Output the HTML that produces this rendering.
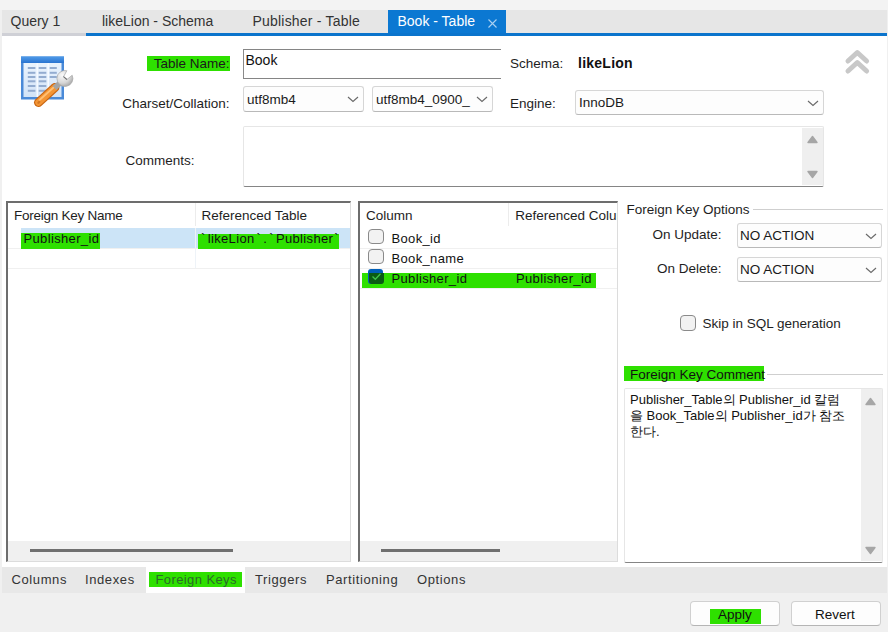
<!DOCTYPE html>
<html><head><meta charset="utf-8"><style>
html,body{margin:0;padding:0;width:888px;height:632px;overflow:hidden;background:#f0f0f0}
body{position:relative;font-family:"Liberation Sans",sans-serif}
.r{position:absolute}
.t{position:absolute;line-height:1;white-space:nowrap}
</style></head><body>
<div class="r" style="left:0px;top:0px;width:888px;height:632px;background:#f0f0f0"></div>
<div class="r" style="left:0px;top:0px;width:888px;height:10px;background:#f3f3f3"></div>
<div class="r" style="left:2px;top:10px;width:885px;height:23px;background:#e6e6e6"></div>
<div class="r" style="left:2px;top:33px;width:84px;height:3px;background:#cfd0d6"></div>
<div class="r" style="left:86px;top:33px;width:801px;height:3px;background:#0b74cc"></div>
<div class="r" style="left:388px;top:10px;width:118px;height:23px;background:#0b78d2"></div>
<div class="r" style="left:2px;top:36px;width:885px;height:531px;background:#ffffff"></div>
<div class="t" style="left:10.50px;top:13.65px;font-size:14px;color:#333;">Query 1</div>
<div class="t" style="left:102.00px;top:13.65px;font-size:14px;color:#333;">likeLion - Schema</div>
<div class="t" style="left:252.50px;top:13.65px;font-size:14px;color:#333;letter-spacing:0.2px">Publisher - Table</div>
<div class="t" style="left:397.50px;top:13.65px;font-size:14px;color:#fff;">Book - Table</div>
<svg class="r" style="left:487px;top:18px" width="11" height="11"><path d="M1.5 1.5L9.5 9.5M9.5 1.5L1.5 9.5" stroke="#a9d0f2" stroke-width="1.1"/></svg>
<svg class="r" style="left:18px;top:52px" width="62" height="62" viewBox="0 0 62 62">
<defs><linearGradient id="tg" x1="0" y1="0" x2="0" y2="1"><stop offset="0" stop-color="#eaf3fd"/><stop offset="1" stop-color="#d2e3f7"/></linearGradient>
<linearGradient id="hb" x1="0" y1="0" x2="0" y2="1"><stop offset="0" stop-color="#4f9be9"/><stop offset="1" stop-color="#2a74d0"/></linearGradient>
<radialGradient id="hg" cx="0.35" cy="0.3" r="0.8"><stop offset="0" stop-color="#fafafa"/><stop offset="0.6" stop-color="#d6d6d6"/><stop offset="1" stop-color="#9e9e9e"/></radialGradient></defs>
<rect x="3" y="4.5" width="43" height="43" fill="#4a8ad8"/>
<rect x="3" y="4.5" width="43" height="6.5" fill="url(#hb)"/>
<rect x="5.5" y="11" width="38" height="34" fill="url(#tg)"/>
<rect x="18.5" y="11" width="1.6" height="34" fill="#f6faff"/><rect x="29.4" y="11" width="1.6" height="34" fill="#f6faff"/>
<rect x="9.8" y="15" width="7.6" height="2" fill="#93acd0"/><rect x="20.7" y="15" width="7.6" height="2" fill="#93acd0"/><rect x="31.7" y="15" width="7.1" height="2" fill="#93acd0"/><rect x="9.8" y="19.8" width="7.6" height="2" fill="#93acd0"/><rect x="20.7" y="19.8" width="7.6" height="2" fill="#93acd0"/><rect x="31.7" y="19.8" width="7.1" height="2" fill="#93acd0"/><rect x="9.8" y="24" width="7.6" height="2" fill="#93acd0"/><rect x="20.7" y="24" width="7.6" height="2" fill="#93acd0"/><rect x="31.7" y="24" width="7.1" height="2" fill="#93acd0"/><rect x="9.8" y="28.3" width="7.6" height="2" fill="#93acd0"/><rect x="20.7" y="28.3" width="7.6" height="2" fill="#93acd0"/><rect x="9.8" y="33" width="7.6" height="2" fill="#93acd0"/><rect x="20.7" y="33" width="7.6" height="2" fill="#93acd0"/><rect x="9.8" y="37.8" width="7.6" height="2" fill="#93acd0"/><rect x="20.7" y="37.8" width="7.6" height="2" fill="#93acd0"/>
<path d="M20.5 50.5 L36.9 35.5" stroke="#c86410" stroke-width="9" stroke-linecap="round"/>
<path d="M20.5 50.5 L36.9 35.5" stroke="#f39535" stroke-width="6.5" stroke-linecap="round"/>
<path d="M21.5 48 L35.5 35.5" stroke="#ffbf73" stroke-width="1.8" stroke-linecap="round"/>
<ellipse cx="20.8" cy="50.3" rx="1.8" ry="1.2" fill="#d47722" transform="rotate(-42 20.8 50.3)"/>
<path d="M36.5 36 L42 31" stroke="#a4a4a4" stroke-width="5.5"/>
<path d="M48.84 18.74 A8 8 0 1 0 54.2 23.24 L48.9 27.53 L45.54 24.7 Z" fill="url(#hg)" stroke="#a6a6a6" stroke-width="0.7"/>
<path d="M45.54 24.7 L48.9 27.53" stroke="#707070" stroke-width="1.1"/>
</svg>
<div class="r" style="left:147px;top:56px;width:83px;height:15px;background:#2ee000"></div>
<div class="t" style="right:658.50px;top:56.97px;font-size:13.5px;color:#1a1a1a;">Table Name:</div>
<div class="t" style="right:658.50px;top:96.67px;font-size:13.5px;color:#1e1e1e;">Charset/Collation:</div>
<div class="t" style="right:693.50px;top:153.57px;font-size:13.5px;color:#1e1e1e;">Comments:</div>
<div class="r" style="left:243px;top:48.5px;width:258px;height:30.0px;border-top:1.5px solid #858585;border-bottom:1.5px solid #858585;border-left:1.5px solid #8a8a8a;background:#fff;box-sizing:border-box"></div>
<div class="t" style="left:245.50px;top:53.05px;font-size:14px;color:#111;">Book</div>
<div class="r" style="left:243px;top:86px;width:121px;height:26px;border:1px solid #d6d6d6;border-bottom-color:#b9b9b9;border-radius:3px;background:#fdfdfd;box-sizing:border-box"></div><div class="t" style="left:247.00px;top:92.87px;font-size:13.5px;color:#1a1a1a;">utf8mb4</div><svg class="r" style="left:347px;top:95.0px" width="12" height="8"><path d="M1 2L6 6.5L11 2" fill="none" stroke="#6a6a6a" stroke-width="1.15"/></svg>
<div class="r" style="left:372px;top:86px;width:121px;height:26px;border:1px solid #d6d6d6;border-bottom-color:#b9b9b9;border-radius:3px;background:#fdfdfd;box-sizing:border-box"></div><div class="t" style="left:376.00px;top:92.87px;font-size:13.5px;color:#1a1a1a;">utf8mb4_0900_</div><svg class="r" style="left:476px;top:95.0px" width="12" height="8"><path d="M1 2L6 6.5L11 2" fill="none" stroke="#6a6a6a" stroke-width="1.15"/></svg>
<div class="t" style="left:510.00px;top:56.87px;font-size:13.5px;color:#1e1e1e;">Schema:</div>
<div class="t" style="left:578.00px;top:56.45px;font-size:14px;color:#111;font-weight:bold;letter-spacing:0.25px">likeLion</div>
<div class="t" style="left:510.00px;top:96.87px;font-size:13.5px;color:#1e1e1e;">Engine:</div>
<div class="r" style="left:575px;top:90px;width:249px;height:25px;border:1px solid #d6d6d6;border-bottom-color:#b9b9b9;border-radius:3px;background:#fdfdfd;box-sizing:border-box"></div><div class="t" style="left:579.00px;top:96.37px;font-size:13.5px;color:#1a1a1a;">InnoDB</div><svg class="r" style="left:807px;top:98.5px" width="12" height="8"><path d="M1 2L6 6.5L11 2" fill="none" stroke="#6a6a6a" stroke-width="1.15"/></svg>
<div class="r" style="left:243px;top:126px;width:581px;height:61px;border:1px solid #e6e6e6;border-bottom:1.5px solid #858585;border-radius:2px;background:#fff;box-sizing:border-box"></div>
<div class="r" style="left:802px;top:128px;width:21px;height:57px;background:#efefef"></div>
<svg class="r" style="left:805.5px;top:134px" width="13" height="10"><path d="M2 8.5L6.5 2.5L11 8.5Z" fill="#a6a6a6" stroke="#a6a6a6" stroke-width="1.4" stroke-linejoin="round"/></svg>
<svg class="r" style="left:805.5px;top:170px" width="13" height="10"><path d="M2 1.5L6.5 7.5L11 1.5Z" fill="#a6a6a6" stroke="#a6a6a6" stroke-width="1.4" stroke-linejoin="round"/></svg>
<svg class="r" style="left:842px;top:46px" width="32" height="32"><path d="M6 15L15.3 6.5L24.6 15M6 25L15.3 16.5L24.6 25" fill="none" stroke="#c8c8c8" stroke-width="5" stroke-linecap="round" stroke-linejoin="round"/></svg>
<div class="r" style="left:6px;top:201px;width:345px;height:361px;border-top:2px solid #6d6d6d;border-left:2px solid #6d6d6d;border-right:1px solid #dcdcdc;border-bottom:1px solid #dcdcdc;background:#fff;box-sizing:border-box"></div>
<div class="r" style="left:195px;top:203px;width:1px;height:23px;background:#ececec"></div>
<div class="t" style="left:14.00px;top:209.47px;font-size:13.5px;color:#1e1e1e;letter-spacing:-0.25px">Foreign Key Name</div>
<div class="t" style="left:201.50px;top:209.47px;font-size:13.5px;color:#1e1e1e;">Referenced Table</div>
<div class="r" style="left:21px;top:228px;width:329px;height:20px;background:#cce4f7"></div>
<div class="r" style="left:195px;top:228px;width:1px;height:40px;background:#eef3f8"></div>
<div class="r" style="left:8px;top:248px;width:342px;height:1px;background:#f0f0f0"></div>
<div class="r" style="left:8px;top:268px;width:342px;height:1px;background:#f0f0f0"></div>
<div class="r" style="left:21px;top:233px;width:79px;height:16px;background:#2ee000"></div>
<div class="r" style="left:198px;top:233.5px;width:141px;height:15.0px;background:#2ee000"></div>
<div class="t" style="left:23.50px;top:232.00px;font-size:13px;color:#111;letter-spacing:0.35px">Publisher_id</div>
<div class="t" style="left:201.00px;top:232.00px;font-size:13px;color:#111;letter-spacing:0.35px"><span style="margin-right:2px">`</span>likeLion<span style="margin:0 2px">`</span><span style="margin-right:2px">.</span><span style="margin-right:2px">`</span>Publisher<span style="margin-left:1px">`</span></div>
<div class="r" style="left:8px;top:541px;width:342px;height:20px;background:#f0f0f0"></div>
<div class="r" style="left:30px;top:549px;width:203px;height:3px;background:#707070"></div>
<div class="r" style="left:358px;top:201px;width:260px;height:361px;border-top:2px solid #6d6d6d;border-left:2px solid #6d6d6d;border-right:1px solid #dcdcdc;border-bottom:1px solid #dcdcdc;background:#fff;box-sizing:border-box;overflow:hidden"></div>
<div class="r" style="left:508px;top:203px;width:1px;height:23px;background:#ececec"></div>
<div class="t" style="left:366.00px;top:209.17px;font-size:13.5px;color:#1e1e1e;">Column</div>
<div class="r" style="left:360px;top:203px;width:257px;height:30px;overflow:hidden"><div class="t" style="left:155.30px;top:6.17px;font-size:13.5px;color:#1e1e1e;">Referenced Column</div></div>
<div class="r" style="left:360px;top:248px;width:257px;height:1px;background:#f0f0f0"></div>
<div class="r" style="left:360px;top:268px;width:257px;height:1px;background:#f0f0f0"></div>
<div class="r" style="left:360px;top:288px;width:257px;height:1px;background:#f0f0f0"></div>
<div class="r" style="left:368.3px;top:228.6px;width:15.5px;height:15.5px;border-radius:4px;border:1.8px solid #8a8a8a;background:#f2f2f2;box-sizing:border-box"></div>
<div class="r" style="left:368.3px;top:248.6px;width:15.5px;height:15.5px;border-radius:4px;border:1.8px solid #8a8a8a;background:#f2f2f2;box-sizing:border-box"></div>
<div class="r" style="left:362px;top:273px;width:234px;height:15px;background:#2ee000"></div>
<div class="r" style="left:368.3px;top:268.6px;width:15px;height:15px;border-radius:3px;background:#005fb8"></div>
<div class="r" style="left:368.5px;top:273px;width:15px;height:11px;border-radius:0 0 3px 3px;background:#0a5a14"></div>
<svg class="r" style="left:368.5px;top:269px" width="15" height="15"><path d="M3.5 7.5L6.3 10.3L11.5 4.8" fill="none" stroke="#3ec24a" stroke-width="1.3"/></svg>
<div class="t" style="left:391.50px;top:231.70px;font-size:13px;color:#111;letter-spacing:0.35px">Book_id</div>
<div class="t" style="left:391.50px;top:251.70px;font-size:13px;color:#111;letter-spacing:0.35px">Book_name</div>
<div class="t" style="left:391.50px;top:271.70px;font-size:13px;color:#111;letter-spacing:0.35px">Publisher_id</div>
<div class="t" style="left:516.00px;top:271.70px;font-size:13px;color:#111;letter-spacing:0.35px">Publisher_id</div>
<div class="r" style="left:360px;top:541px;width:257px;height:20px;background:#f0f0f0"></div>
<div class="r" style="left:381px;top:549px;width:119px;height:3px;background:#707070"></div>
<div class="t" style="left:626.50px;top:203.17px;font-size:13.5px;color:#1e1e1e;">Foreign Key Options</div>
<div class="r" style="left:753px;top:208.5px;width:130px;height:1.5px;background:#cfcfcf"></div>
<div class="t" style="right:166.50px;top:227.97px;font-size:13.5px;color:#1e1e1e;">On Update:</div>
<div class="t" style="right:166.50px;top:261.57px;font-size:13.5px;color:#1e1e1e;">On Delete:</div>
<div class="r" style="left:737px;top:223px;width:145px;height:25px;border:1px solid #d6d6d6;border-bottom-color:#b9b9b9;border-radius:3px;background:#fdfdfd;box-sizing:border-box"></div><div class="t" style="left:740.00px;top:229.37px;font-size:13.5px;color:#1a1a1a;">NO ACTION</div><svg class="r" style="left:865px;top:231.5px" width="12" height="8"><path d="M1 2L6 6.5L11 2" fill="none" stroke="#6a6a6a" stroke-width="1.15"/></svg>
<div class="r" style="left:737px;top:257px;width:145px;height:25px;border:1px solid #d6d6d6;border-bottom-color:#b9b9b9;border-radius:3px;background:#fdfdfd;box-sizing:border-box"></div><div class="t" style="left:740.00px;top:263.37px;font-size:13.5px;color:#1a1a1a;">NO ACTION</div><svg class="r" style="left:865px;top:265.5px" width="12" height="8"><path d="M1 2L6 6.5L11 2" fill="none" stroke="#6a6a6a" stroke-width="1.15"/></svg>
<div class="r" style="left:680px;top:315px;width:15.5px;height:15.5px;border:1.8px solid #8a8a8a;border-radius:4px;background:#f2f2f2;box-sizing:border-box"></div>
<div class="t" style="left:702.50px;top:316.97px;font-size:13.5px;color:#1e1e1e;">Skip in SQL generation</div>
<div class="r" style="left:624px;top:366px;width:140px;height:15px;background:#2ee000"></div>
<div class="t" style="left:630.00px;top:367.57px;font-size:13.5px;color:#111;">Foreign Key Comment</div>
<div class="r" style="left:767px;top:373.5px;width:116px;height:1.5px;background:#cfcfcf"></div>
<div class="r" style="left:623.5px;top:388px;width:259.0px;height:175px;border:1px solid #e6e6e6;border-bottom:1.5px solid #858585;border-radius:2px;background:#fff;box-sizing:border-box"></div>
<div class="r" style="left:861px;top:389px;width:21px;height:172px;background:#efefef"></div>
<svg class="r" style="left:864px;top:395.5px" width="13" height="10"><path d="M2 8.5L6.5 2.5L11 8.5Z" fill="#a6a6a6" stroke="#a6a6a6" stroke-width="1.4" stroke-linejoin="round"/></svg>
<svg class="r" style="left:864px;top:546px" width="13" height="10"><path d="M2 1.5L6.5 7.5L11 1.5Z" fill="#a6a6a6" stroke="#a6a6a6" stroke-width="1.4" stroke-linejoin="round"/></svg>
<div class="t" style="left:630.00px;top:393.00px;font-size:13px;color:#111;">Publisher_Table의 Publisher_id 칼럼</div>
<div class="t" style="left:630.00px;top:409.40px;font-size:13px;color:#111;">을 Book_Table의 Publisher_id가 참조</div>
<div class="t" style="left:630.00px;top:425.00px;font-size:13px;color:#111;">한다.</div>
<div class="r" style="left:2px;top:567px;width:885px;height:26px;background:#e8e8e8"></div>
<div class="r" style="left:146px;top:562px;width:99px;height:31px;background:#ffffff"></div>
<div class="r" style="left:148.5px;top:572px;width:93.0px;height:14.5px;background:#2ee000"></div>
<div class="t" style="left:11.50px;top:573.40px;font-size:13px;color:#333;letter-spacing:0.6px">Columns</div>
<div class="t" style="left:85.00px;top:573.40px;font-size:13px;color:#333;letter-spacing:0.6px">Indexes</div>
<div class="t" style="left:155.50px;top:573.40px;font-size:13px;color:#2a6a2a;letter-spacing:0.6px;letter-spacing:0.4px">Foreign Keys</div>
<div class="t" style="left:255.00px;top:573.40px;font-size:13px;color:#333;letter-spacing:0.6px">Triggers</div>
<div class="t" style="left:326.00px;top:573.40px;font-size:13px;color:#333;letter-spacing:0.6px">Partitioning</div>
<div class="t" style="left:417.00px;top:573.40px;font-size:13px;color:#333;letter-spacing:0.6px">Options</div>
<div class="r" style="left:690px;top:601px;width:90px;height:25px;border:1px solid #d0d0d0;border-bottom-color:#b5b5b5;border-radius:4px;background:#fdfdfd;box-sizing:border-box"></div>
<div class="r" style="left:791px;top:601px;width:90px;height:25px;border:1px solid #d0d0d0;border-bottom-color:#b5b5b5;border-radius:4px;background:#fdfdfd;box-sizing:border-box"></div>
<div class="r" style="left:710px;top:608.5px;width:51px;height:15.0px;background:#2ee000"></div>
<div class="t" style="left:718.00px;top:608.07px;font-size:13.5px;color:#111;">Apply</div>
<div class="t" style="left:815.00px;top:608.07px;font-size:13.5px;color:#111;">Revert</div>
</body></html>
